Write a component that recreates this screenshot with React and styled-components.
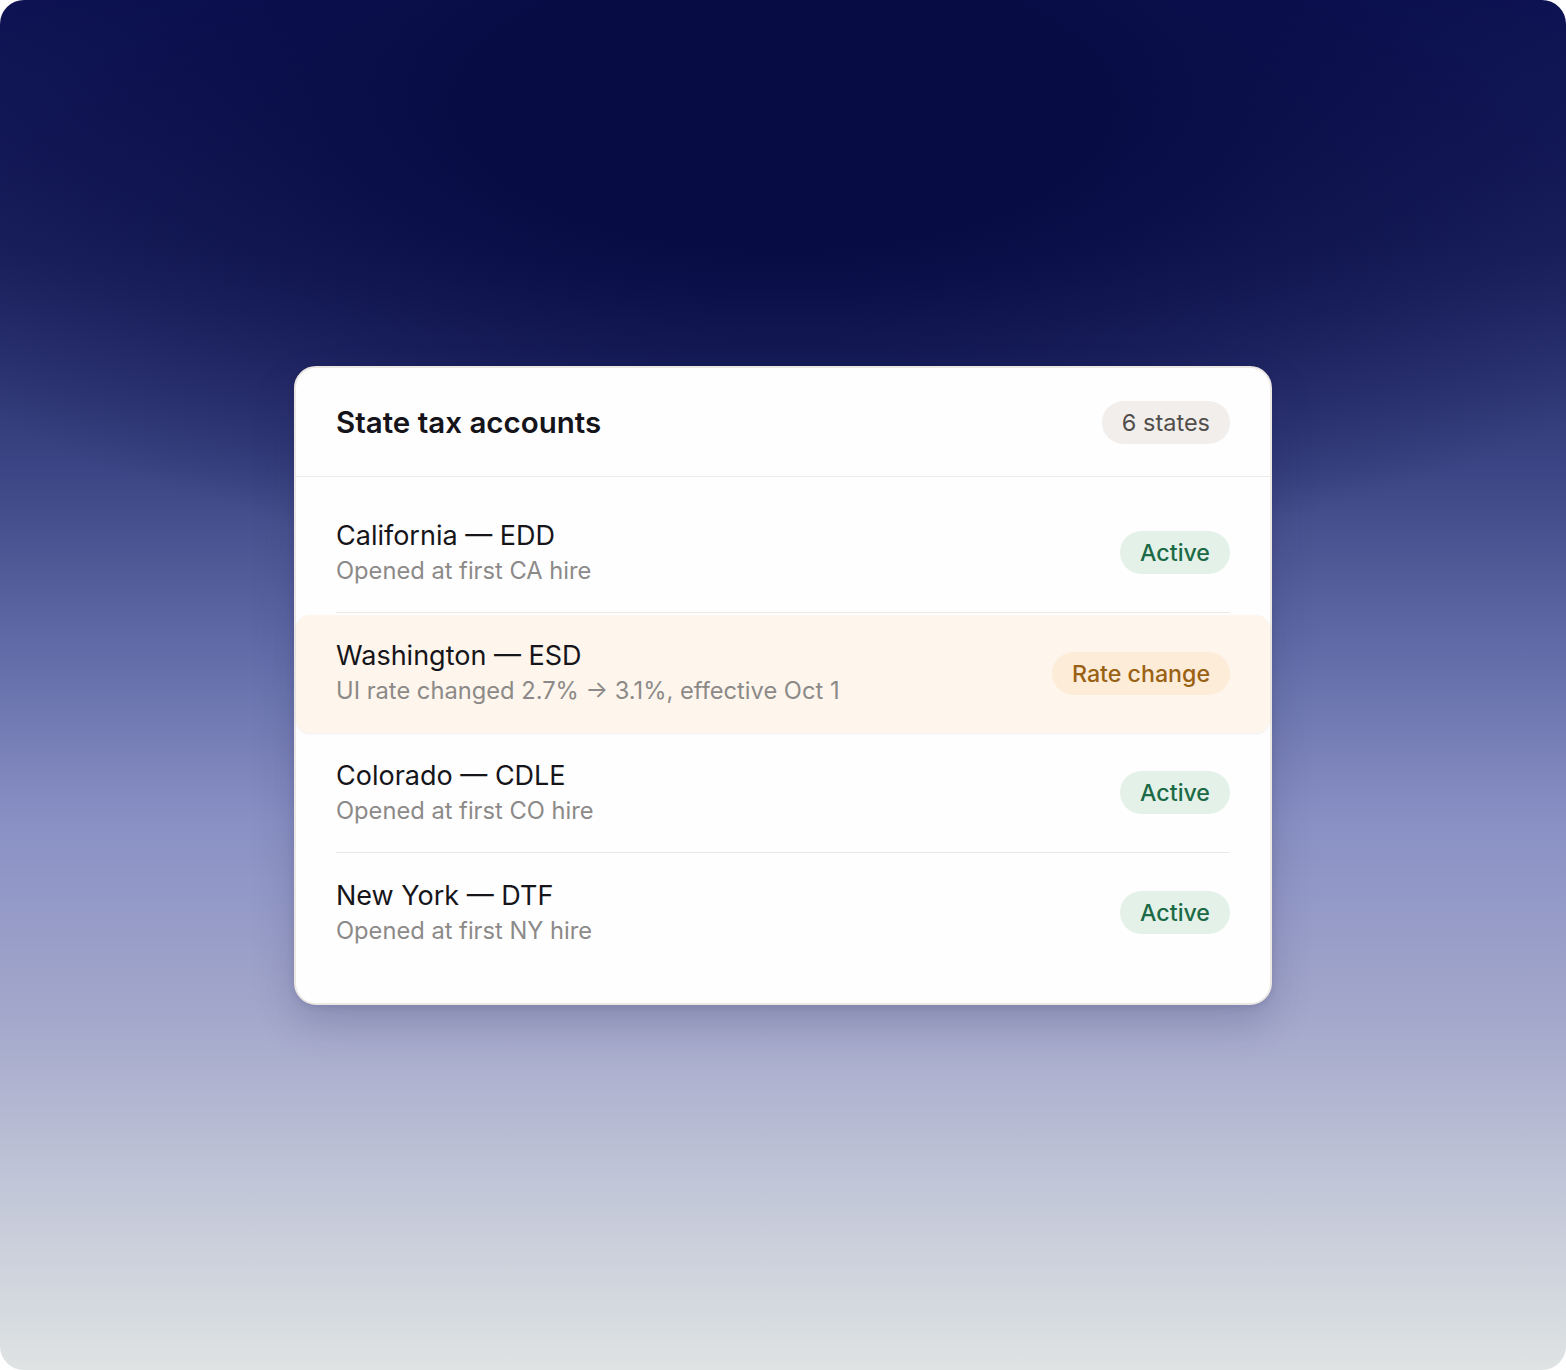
import React from "react";
import styled, { createGlobalStyle } from "styled-components";

const GlobalStyle = createGlobalStyle`
  html, body {
    margin: 0;
    padding: 0;
    background: #ffffff;
  }
  body {
    font-family: Inter, "Noto Sans", "Liberation Sans", sans-serif;
    -webkit-font-smoothing: antialiased;
  }
`;

const Frame = styled.div`
  width: 1566px;
  height: 1370px;
  border-radius: 24px;
  overflow: hidden;
  display: flex;
  align-items: flex-start;
  justify-content: center;
  padding-top: 366px;
  box-sizing: border-box;
  background:
    radial-gradient(ellipse 68% 34% at 50% 8%, rgba(8, 12, 69, 1) 30%, rgba(8, 12, 69, 0) 100%),
    linear-gradient(
      to bottom,
      #10155a 0%,
      #1f2662 18%,
      #3b4484 34%,
      #636da8 48%,
      #8990c4 60%,
      #a3a7cb 74%,
      #c2c7d8 87%,
      #dfe3e3 100%
    );
`;

const Card = styled.section`
  width: 978px;
  background: #fffeff;
  border: 2px solid #ebe7e3;
  border-radius: 22px;
  box-shadow: 0 18px 40px rgba(40, 44, 90, 0.22), 0 2px 6px rgba(40, 44, 90, 0.12);
  box-sizing: border-box;
  padding-bottom: 30px;
`;

const Header = styled.header`
  display: flex;
  align-items: center;
  justify-content: space-between;
  height: 108px;
  padding: 0 40px;
  border-bottom: 1px solid #eeeae6;
`;

const Title = styled.h2`
  margin: 0;
  font-size: 29.5px;
  font-weight: 600;
  color: #15141a;
`;

const Pill = styled.span`
  display: inline-flex;
  align-items: center;
  height: 43px;
  padding: 0 20px;
  border-radius: 22px;
  font-size: ${({ $tone }) => ($tone === "muted" ? "23.5px" : "23.2px")};
  font-weight: ${({ $tone }) => ($tone === "muted" ? 400 : 500)};
  white-space: nowrap;
  background: ${({ $tone }) =>
    $tone === "success" ? "#e4f1e9" : $tone === "warning" ? "#fdecd8" : "#f1eeeb"};
  color: ${({ $tone }) =>
    $tone === "success" ? "#1c6a45" : $tone === "warning" ? "#9a6214" : "#514e4c"};
`;

const List = styled.div`
  padding-top: 16px;
`;

const Row = styled.div`
  padding: 0 40px;
  background: ${({ $flagged }) => ($flagged ? "#fef6ec" : "transparent")};
  border-radius: ${({ $flagged }) => ($flagged ? "14px" : "0")};
  box-shadow: ${({ $flagged }) => ($flagged ? "0 1px 2px rgba(60, 40, 20, 0.08)" : "none")};
  margin-top: ${({ $flagged }) => ($flagged ? "2px" : "0")};
  height: ${({ $flagged }) => ($flagged ? "118px" : "120px")};
`;

const RowInner = styled.div`
  display: flex;
  align-items: center;
  justify-content: space-between;
  height: 100%;
  box-sizing: border-box;
  border-bottom: 1px solid ${({ $divider }) => ($divider ? "#ece8e4" : "transparent")};
`;

const Info = styled.div`
  display: flex;
  flex-direction: column;
  margin-top: ${({ $flagged }) => ($flagged ? "-2px" : "0")};
`;

const Name = styled.div`
  font-size: 27px;
  line-height: 35px;
  color: #16151a;
  font-weight: 400;
`;

const Note = styled.div`
  font-size: 23.7px;
  line-height: 35px;
  color: #8c8a88;
`;

const accounts = [
  { name: "California — EDD", note: "Opened at first CA hire", status: "Active", tone: "success" },
  {
    name: "Washington — ESD",
    note: "UI rate changed 2.7% → 3.1%, effective Oct 1",
    status: "Rate change",
    tone: "warning",
    flagged: true,
  },
  { name: "Colorado — CDLE", note: "Opened at first CO hire", status: "Active", tone: "success" },
  { name: "New York — DTF", note: "Opened at first NY hire", status: "Active", tone: "success" },
];

export default function App() {
  return (
    <>
      <GlobalStyle />
      <Frame>
        <Card>
          <Header>
            <Title>State tax accounts</Title>
            <Pill $tone="muted">6 states</Pill>
          </Header>
          <List>
            {accounts.map((acc, i) => {
              const next = accounts[i + 1];
              // a flagged row carries its own edge, so no rule directly under it
              const divider = Boolean(next) && !acc.flagged;
              return (
                <Row key={acc.name} $flagged={acc.flagged}>
                  <RowInner $divider={divider}>
                    <Info $flagged={acc.flagged}>
                      <Name>{acc.name}</Name>
                      <Note>{acc.note}</Note>
                    </Info>
                    <Pill $tone={acc.tone}>{acc.status}</Pill>
                  </RowInner>
                </Row>
              );
            })}
          </List>
        </Card>
      </Frame>
    </>
  );
}
